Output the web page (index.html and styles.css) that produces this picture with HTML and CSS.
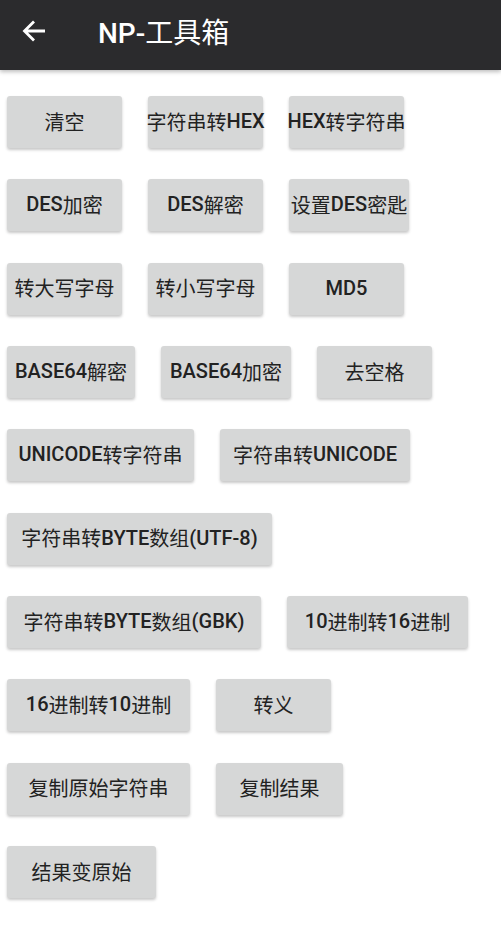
FILE: index.html
```html
<!DOCTYPE html>
<html lang="zh">
<head>
  <meta charset="UTF-8" />
  <title>NP-工具箱</title>
  <link rel="stylesheet" href="styles.css">
</head>
<body>
  <div class="toolbar">
    <svg class="back" width="26" height="26" viewBox="0 0 26 26">
      <path d="M24 13H3.5M13 3.5L3.5 13L13 22.5" fill="none" stroke="#fff" stroke-width="2.8"/>
    </svg>
    <h1 class="title"><b>NP-</b>工具箱</h1>
  </div>

  <div class="tools">
    <div class="row">
      <button>清空</button>
      <button>字符串转<b>HEX</b></button>
      <button><b>HEX</b>转字符串</button>
    </div>
    <div class="row">
      <button><b>DES</b>加密</button>
      <button><b>DES</b>解密</button>
      <button class="w120">设置<b>DES</b>密匙</button>
    </div>
    <div class="row">
      <button>转大写字母</button>
      <button>转小写字母</button>
      <button><b>MD5</b></button>
    </div>
    <div class="row">
      <button class="w128"><b>BASE64</b>解密</button>
      <button class="w130"><b>BASE64</b>加密</button>
      <button>去空格</button>
    </div>
    <div class="row">
      <button class="w187"><b>UNICODE</b>转字符串</button>
      <button class="w190">字符串转<b>UNICODE</b></button>
    </div>
    <div class="row">
      <button class="w265">字符串转<b>BYTE</b>数组<b>(UTF-8)</b></button>
    </div>
    <div class="row">
      <button class="w254">字符串转<b>BYTE</b>数组<b>(GBK)</b></button>
      <button class="w181"><b>10</b>进制转<b>16</b>进制</button>
    </div>
    <div class="row">
      <button class="w183"><b>16</b>进制转<b>10</b>进制</button>
      <button>转义</button>
    </div>
    <div class="row">
      <button class="w183">复制原始字符串</button>
      <button class="w127">复制结果</button>
    </div>
    <div class="row">
      <button class="w149">结果变原始</button>
    </div>
  </div>
</body>
</html>
```

FILE: styles.css
```css
body {
  margin: 0;
  background: #fff;
  font-family: Roboto, "Noto Sans CJK SC", sans-serif;
}
b {
  font-weight: 500;
}
.toolbar {
  height: 70px;
  background: #2b2b2d;
  display: flex;
  align-items: center;
  box-shadow: 0 2px 4px rgba(0, 0, 0, 0.25);
}
.back {
  margin-left: 21px;
  margin-top: -8px;
}
.title {
  margin: -9px 0 0 51px;
  color: #fff;
  font-size: 28px;
  font-weight: 400;
}
.tools {
  padding: 26px 7px;
  display: flex;
  flex-direction: column;
  gap: 31.35px;
}
.row {
  display: flex;
  gap: 26px;
}
button {
  height: 52px;
  width: 115px;
  padding: 0 0 2px;
  border: none;
  border-radius: 3px;
  background: #d6d7d7;
  color: #222;
  font-family: Roboto, "Noto Sans CJK SC", sans-serif;
  font-size: 20px;
  font-weight: 400;
  box-shadow: 0 2px 3px rgba(0, 0, 0, 0.22);
  white-space: nowrap;
  display: flex;
  align-items: center;
  justify-content: center;
  overflow: visible;
}
.w120 { width: 120px; }
.w127 { width: 127px; }
.w128 { width: 128px; }
.w130 { width: 130px; }
.w149 { width: 149px; }
.w181 { width: 181px; }
.w183 { width: 183px; }
.w187 { width: 187px; }
.w190 { width: 190px; }
.w254 { width: 254px; }
.w265 { width: 265px; }
```
